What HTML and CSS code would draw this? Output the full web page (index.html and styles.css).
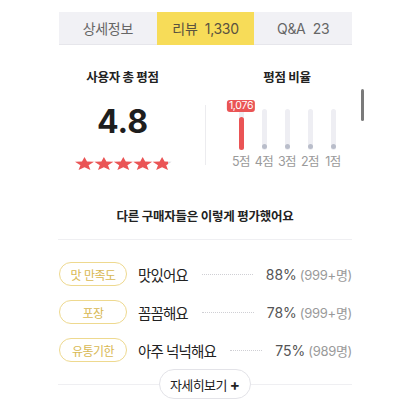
FILE: index.html
```html
<!DOCTYPE html>
<html lang="ko">
<head>
<meta charset="utf-8">
<link rel="stylesheet" href="styles.css">
</head>
<body>
<div class="page">
  <div class="tabs">
    <div class="tab">상세정보</div>
    <div class="tab active">리뷰&nbsp; 1,330</div>
    <div class="tab">Q&amp;A&nbsp; 23</div>
  </div>

  <div class="summary">
    <div class="score-col">
      <div class="col-title">사용자 총 평점</div>
      <div class="score">4.8</div>
      <svg class="stars" width="97" height="13" viewBox="0 0 97 13" preserveAspectRatio="none">
        <defs>
          <linearGradient id="partial" x1="0" x2="1" y1="0" y2="0">
            <stop offset="0.82" stop-color="#ea5455"/>
            <stop offset="0.82" stop-color="#d8d8de"/>
          </linearGradient>
          <polygon id="st" points="9.5,0 12,4.5 19,4.8 13.6,8.2 15.4,13 9.5,10.3 3.6,13 5.4,8.2 0,4.8 7,4.5"/>
        </defs>
        <use href="#st" x="0" fill="#ea5455"/>
        <use href="#st" x="19.4" fill="#ea5455"/>
        <use href="#st" x="38.8" fill="#ea5455"/>
        <use href="#st" x="58.2" fill="#ea5455"/>
        <use href="#st" x="77.6" fill="url(#partial)"/>
      </svg>
    </div>
    <div class="vdivider"></div>
    <div class="ratio-col">
      <div class="col-title">평점 비율</div>
      <div class="chart">
        <div class="bar-col">
          <div class="track"><div class="fill" style="height:80%"><span class="badge">1,076</span></div></div>
          <div class="bar-label">5점</div>
        </div>
        <div class="bar-col">
          <div class="track"><div class="dot"></div></div>
          <div class="bar-label">4점</div>
        </div>
        <div class="bar-col">
          <div class="track"><div class="dot"></div></div>
          <div class="bar-label">3점</div>
        </div>
        <div class="bar-col">
          <div class="track"><div class="dot"></div></div>
          <div class="bar-label">2점</div>
        </div>
        <div class="bar-col">
          <div class="track"><div class="dot"></div></div>
          <div class="bar-label">1점</div>
        </div>
      </div>
    </div>
  </div>

  <div class="others">
    <div class="others-title">다른 구매자들은 이렇게 평가했어요</div>
    <div class="rows">
      <div class="row">
        <span class="pill">맛 만족도</span>
        <span class="answer">맛있어요</span>
        <span class="leader"></span>
        <span class="pct">88%</span>
        <span class="count">(999+명)</span>
      </div>
      <div class="row">
        <span class="pill">포장</span>
        <span class="answer">꼼꼼해요</span>
        <span class="leader"></span>
        <span class="pct">78%</span>
        <span class="count">(999+명)</span>
      </div>
      <div class="row">
        <span class="pill">유통기한</span>
        <span class="answer">아주 넉넉해요</span>
        <span class="leader"></span>
        <span class="pct">75%</span>
        <span class="count">(989명)</span>
      </div>
    </div>
    <div class="more-wrap">
      <span class="hline"></span>
      <button class="more">자세히보기 <span class="plus">+</span></button>
      <span class="hline"></span>
    </div>
  </div>

  <div class="scrollbar"></div>
</div>
</body>
</html>
```

FILE: styles.css
```css
* { box-sizing: border-box; }
html, body { margin: 0; padding: 0; background: #fff; }
body {
  font-family: Inter, "Noto Sans CJK KR", sans-serif;
  color: #222;
}
.page {
  position: relative;
  width: 410px;
  height: 410px;
  overflow: hidden;
}

/* tabs */
.tabs {
  display: flex;
  margin: 12px 58px 0 59px;
  height: 33px;
}
.tab {
  flex: 1;
  display: flex;
  align-items: center;
  justify-content: center;
  background: #f1f1f5;
  border-bottom: 1px solid #e6e6eb;
  font-size: 14px;
  letter-spacing: -0.3px;
  color: #666;
}
.tab.active {
  background: #f7dc58;
  border-bottom-color: #f7dc58;
  color: #5a5240;
}

/* summary */
.summary {
  display: flex;
  margin-top: 24px;
  padding-left: 40px;
}
.score-col {
  flex: 0 0 165px;
  display: flex;
  flex-direction: column;
  align-items: center;
}
.col-title {
  font-size: 12.5px;
  line-height: 18px;
  font-weight: 700;
  letter-spacing: -0.3px;
  color: #222;
}
.score {
  margin-top: 19px;
  font-family: Inter, sans-serif;
  font-size: 32px;
  line-height: 31px;
  font-weight: 700;
  color: #1e1e1e;
}
.stars {
  display: block;
  margin-top: 20px;
  margin-left: 1px;
}
.vdivider {
  width: 1px;
  height: 60px;
  margin-top: 36px;
  background: #ececef;
}
.ratio-col {
  flex: 0 0 162px;
  display: flex;
  flex-direction: column;
  align-items: center;
}
.chart {
  display: flex;
  margin-top: 22px;
}
.bar-col {
  width: 23px;
  display: flex;
  flex-direction: column;
  align-items: center;
}
.track {
  position: relative;
  width: 5px;
  height: 41px;
  border-radius: 3px;
  background: #eeeef3;
  display: flex;
  flex-direction: column;
  justify-content: flex-end;
}
.fill {
  position: relative;
  width: 5px;
  border-radius: 3px;
  background: #ea5455;
}
.badge {
  position: absolute;
  bottom: calc(100% + 5px);
  left: 50%;
  transform: translateX(-50%);
  padding: 0 2px;
  height: 12px;
  line-height: 12px;
  border-radius: 3px;
  background: #ea5455;
  color: #fff;
  font-size: 10.5px;
  letter-spacing: -0.3px;
  white-space: nowrap;
}
.dot {
  width: 5px;
  height: 5px;
  border-radius: 50%;
  background: #b9bdca;
  margin-bottom: 1px;
}
.bar-label {
  margin-top: 4px;
  font-size: 12.5px;
  line-height: 16px;
  letter-spacing: -0.6px;
  color: #9a9a9a;
  white-space: nowrap;
}

/* others */
.others {
  margin: 38px 58px 0 58px;
}
.others-title {
  text-align: center;
  font-size: 12.5px;
  line-height: 18px;
  font-weight: 700;
  letter-spacing: -0.25px;
  padding-bottom: 13px;
  border-bottom: 1px solid #efeff2;
}
.rows {
  display: flex;
  flex-direction: column;
  gap: 14px;
  margin-top: 22px;
  padding-left: 1px;
}
.row {
  display: flex;
  align-items: center;
  height: 24px;
}
.pill {
  flex: 0 0 68px;
  height: 24px;
  display: flex;
  align-items: center;
  justify-content: center;
  border: 1px solid #eed98f;
  border-radius: 12px;
  font-size: 12px;
  letter-spacing: -0.5px;
  color: #d8b852;
}
.answer {
  margin-left: 11px;
  font-size: 14.5px;
  letter-spacing: -0.9px;
  color: #222;
}
.leader {
  flex: 1;
  margin: 0 13px 0 14px;
  border-top: 1px dotted #cfcfd4;
}
.pct {
  font-size: 14px;
  color: #555;
}
.count {
  margin-left: 3px;
  font-size: 13px;
  color: #9a9a9a;
  letter-spacing: -0.3px;
}
.more-wrap {
  display: flex;
  align-items: center;
  margin-top: 7px;
}
.hline {
  flex: 1;
  height: 1px;
  background: #efeff2;
}
.more {
  width: 92px;
  height: 30px;
  border: 1px solid #e3e3e8;
  border-radius: 15px;
  background: #fff;
  font-family: Inter, "Noto Sans CJK KR", sans-serif;
  font-size: 13px;
  letter-spacing: -0.6px;
  color: #222;
  padding: 0;
}
.plus {
  font-weight: 700;
  font-size: 15px;
  letter-spacing: 0;
}

.scrollbar {
  position: absolute;
  left: 361px;
  top: 89px;
  width: 3px;
  height: 32px;
  border-radius: 2px;
  background: #7a7a7a;
}
```
